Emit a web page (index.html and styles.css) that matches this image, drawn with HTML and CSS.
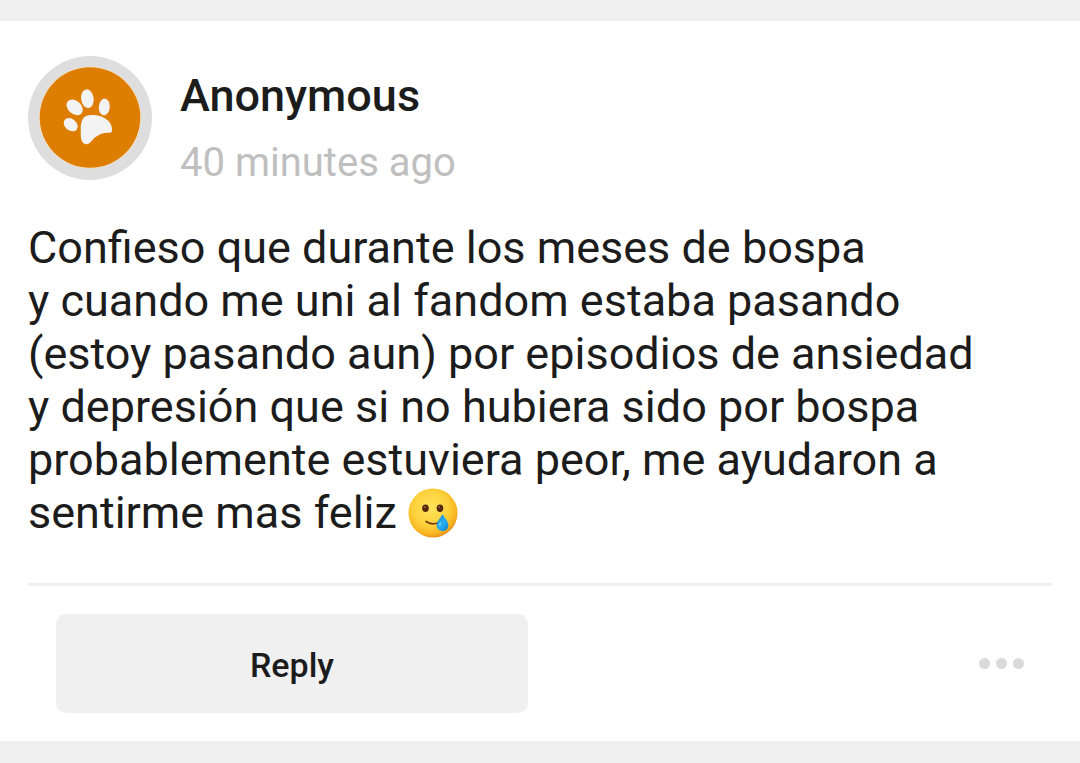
FILE: index.html
```html
<!DOCTYPE html>
<html lang="es">
<head>
    <meta charset="UTF-8">
    <meta name="viewport" content="width=device-width, initial-scale=1.0">
    <title>Anonymous</title>
    <link rel="stylesheet" href="styles.css">
</head>
<body>
    <article class="post">
        <header class="post-header">
            <svg class="avatar" viewBox="0 0 124 124" aria-hidden="true">
                <circle cx="62" cy="62" r="62" fill="#dedede"/>
                <circle cx="62" cy="61.5" r="51" fill="#fbe3c0"/>
                <circle cx="62" cy="61.5" r="50.3" fill="#de7e00"/>
                <g fill="#f3f3f3">
                    <ellipse cx="42.7" cy="68.7" rx="7.7" ry="5.8" transform="rotate(38 42.7 68.7)"/>
                    <ellipse cx="46.7" cy="51.3" rx="9.2" ry="6.6" transform="rotate(42 46.7 51.3)"/>
                    <ellipse cx="59.4" cy="42.7" rx="6.3" ry="9.4" transform="rotate(-8 59.4 42.7)"/>
                    <ellipse cx="76.3" cy="51" rx="5.5" ry="8.4" transform="rotate(5 76.3 51)"/>
                    <path d="M52.7 72C53 66 54.5 62 57.5 60.3C60 58.9 64 58.7 67 59C72 59.6 76.5 61.5 80 64.5C83 67.2 84.2 71 84 74.5C83.8 76.7 82.5 77 80 76.8C76 76.6 72 78 68 80.7C64 83.5 62.5 88 58.3 88.2C54.5 88.2 53.2 84.5 52.8 80Z"/>
                </g>
            </svg>
            <div class="post-meta">
                <h1 class="author">Anonymous</h1>
                <time class="time">40 minutes ago</time>
            </div>
        </header>

        <p class="post-text">
            Confieso que durante los meses de bospa<br>
            y cuando me uni al fandom estaba pasando<br>
            (estoy pasando aun) por episodios de ansiedad<br>
            y depresión que si no hubiera sido por bospa<br>
            probablemente estuviera peor, me ayudaron a<br>
            sentirme mas feliz
            <svg class="emoji" viewBox="0 0 50 50" role="img" aria-label="Smiling face with tear">
                <defs>
                    <radialGradient id="face" cx="45%" cy="40%" r="60%">
                        <stop offset="0" stop-color="#ffe45c"/>
                        <stop offset="0.6" stop-color="#fdd13c"/>
                        <stop offset="0.88" stop-color="#f8b51f"/>
                        <stop offset="1" stop-color="#eb9420"/>
                    </radialGradient>
                    <linearGradient id="tear" x1="0" y1="0" x2="1" y2="1">
                        <stop offset="0" stop-color="#1687c9"/>
                        <stop offset="0.55" stop-color="#27aef0"/>
                        <stop offset="1" stop-color="#1180c6"/>
                    </linearGradient>
                </defs>
                <circle cx="25" cy="25" r="24.5" fill="url(#face)"/>
                <ellipse cx="17.5" cy="20.3" rx="3.3" ry="3.7" fill="#55280c"/>
                <ellipse cx="32" cy="20.3" rx="3.3" ry="3.7" fill="#55280c"/>
                <circle cx="16.7" cy="19" r="0.9" fill="#a0673c"/>
                <circle cx="31.2" cy="19" r="0.9" fill="#a0673c"/>
                <path d="M18 33.5Q23.5 37.5 31 34.5" fill="none" stroke="#74390d" stroke-width="1.7" stroke-linecap="round"/>
                <path d="M34.5 26C33 30 28.6 33 28.6 37.5A5.9 5.5 0 0 0 40.4 37.5C40.4 33 36.5 30 34.5 26Z" fill="url(#tear)"/>
                <ellipse cx="32" cy="36" rx="1" ry="2" fill="#6bd0fb" transform="rotate(20 32 36)"/>
            </svg>
        </p>

        <footer class="post-actions">
            <button class="reply" type="button">Reply</button>
            <button class="more" type="button" aria-label="More options">
                <span class="dot"></span>
                <span class="dot"></span>
                <span class="dot"></span>
            </button>
        </footer>
    </article>
</body>
</html>
```
FILE: styles.css
```css
body {
    margin: 0;
    padding: 21px 0 22px;
    background-color: #f0f0f0;
    font-family: Roboto, "Liberation Sans", sans-serif;
    color: #1c1c1c;
}

.post {
    background: white;
    padding: 35px 28px 28px;
}

.post-header {
    display: flex;
    gap: 28px;
}

.avatar {
    width: 124px;
    height: 124px;
    flex-shrink: 0;
}

.post-meta {
    display: flex;
    flex-direction: column;
    gap: 15px;
    padding-top: 14px;
}

.author {
    margin: 0;
    font-size: 45px;
    font-weight: 500;
    line-height: 52px;
}

.time {
    font-size: 40px;
    line-height: 52px;
    color: #bfbfbf;
}

.post-text {
    margin: 32px 0 44px;
    font-size: 45px;
    line-height: 53px;
}

.emoji {
    width: 50px;
    height: 50px;
    vertical-align: -10px;
}

.post-actions {
    display: flex;
    justify-content: space-between;
    align-items: center;
    padding: 28px 28px 0;
    border-top: 3px solid #f0f0f0;
}

button {
    border: none;
    padding: 0;
    font-family: inherit;
    color: inherit;
    cursor: pointer;
}

.reply {
    width: 50%;
    max-width: 472px;
    padding: 30px 28px 26px;
    border-radius: 10px;
    background-color: #f0f0f0;
    font-size: 34px;
    font-weight: 500;
    line-height: 43px;
}

.more {
    display: flex;
    gap: 6px;
    padding: 20px 0;
    background: none;
}

.dot {
    width: 11px;
    height: 11px;
    border-radius: 50%;
    background-color: #dadada;
}
```
